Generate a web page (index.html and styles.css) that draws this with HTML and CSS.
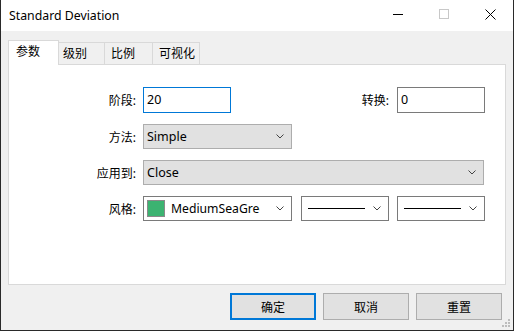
FILE: index.html
```html
<!DOCTYPE html>
<html lang="zh-CN">
<head>
  <meta charset="UTF-8" />
  <title>Standard Deviation</title>
  <link rel="stylesheet" href="styles.css">
</head>
<body>
  <div class="window">
    <div class="titlebar">
      <span class="title">Standard Deviation</span>
      <div class="controls">
        <span class="ctl">
          <svg width="11" height="11" viewBox="0 0 11 11"><line x1="0" y1="5.5" x2="10" y2="5.5" stroke="#000" stroke-width="1"/></svg>
        </span>
        <span class="ctl">
          <svg width="11" height="11" viewBox="0 0 11 11"><rect x="0.5" y="0.5" width="9" height="9" fill="none" stroke="#c8c8c8" stroke-width="1"/></svg>
        </span>
        <span class="ctl">
          <svg width="11" height="11" viewBox="0 0 11 11"><path d="M0.5 0.5 L10.5 10.5 M10.5 0.5 L0.5 10.5" stroke="#000" stroke-width="1"/></svg>
        </span>
      </div>
    </div>

    <div class="body">
      <div class="tabs">
        <div class="tab active">参数</div>
        <div class="tab">级别</div>
        <div class="tab">比例</div>
        <div class="tab">可视化</div>
      </div>

      <div class="panel">
        <div class="row row-1">
          <label class="lbl">阶段:</label>
          <div class="field focus">20</div>
          <label class="lbl lbl-right">转换:</label>
          <div class="field">0</div>
        </div>

        <div class="row">
          <label class="lbl">方法:</label>
          <div class="select w-mid">
            <span class="val">Simple</span>
            <svg class="arrow" width="8" height="5" viewBox="0 0 8 5"><polyline points="0.5,0.5 4,4 7.5,0.5" fill="none" stroke="#444" stroke-width="1"/></svg>
          </div>
        </div>

        <div class="row">
          <label class="lbl">应用到:</label>
          <div class="select w-wide">
            <span class="val">Close</span>
            <svg class="arrow" width="8" height="5" viewBox="0 0 8 5"><polyline points="0.5,0.5 4,4 7.5,0.5" fill="none" stroke="#444" stroke-width="1"/></svg>
          </div>
        </div>

        <div class="row">
          <label class="lbl">风格:</label>
          <div class="select white w-mid">
            <span class="swatch"></span>
            <span class="val clip">MediumSeaGreen</span>
            <svg class="arrow" width="8" height="5" viewBox="0 0 8 5"><polyline points="0.5,0.5 4,4 7.5,0.5" fill="none" stroke="#444" stroke-width="1"/></svg>
          </div>
          <div class="select white w-small gap-9">
            <span class="line"></span>
            <svg class="arrow" width="8" height="5" viewBox="0 0 8 5"><polyline points="0.5,0.5 4,4 7.5,0.5" fill="none" stroke="#444" stroke-width="1"/></svg>
          </div>
          <div class="select white w-small gap-8">
            <span class="line"></span>
            <svg class="arrow" width="8" height="5" viewBox="0 0 8 5"><polyline points="0.5,0.5 4,4 7.5,0.5" fill="none" stroke="#444" stroke-width="1"/></svg>
          </div>
        </div>
      </div>

      <div class="buttons">
        <button class="btn default">确定</button>
        <button class="btn">取消</button>
        <button class="btn">重置</button>
      </div>
    </div>

    <svg class="grip" width="9" height="9" viewBox="0 0 9 9">
      <rect x="6" y="0" width="2" height="2" fill="#bdbdbd"/>
      <rect x="3" y="3" width="2" height="2" fill="#bdbdbd"/>
      <rect x="6" y="3" width="2" height="2" fill="#bdbdbd"/>
      <rect x="0" y="6" width="2" height="2" fill="#bdbdbd"/>
      <rect x="3" y="6" width="2" height="2" fill="#bdbdbd"/>
      <rect x="6" y="6" width="2" height="2" fill="#bdbdbd"/>
    </svg>
  </div>
</body>
</html>
```

FILE: styles.css
```css
* {
  box-sizing: border-box;
}
body {
  margin: 0;
  font-family: "Noto Sans", "Noto Sans CJK SC", sans-serif;
  font-size: 12px;
  color: #000;
  background: #f0f0f0;
}
.window {
  position: relative;
  width: 514px;
  height: 331px;
  border: 1px solid #2a2a2a;
  border-top: none;
  background: #f0f0f0;
  display: flex;
  flex-direction: column;
}
.titlebar {
  height: 31px;
  background: #fff;
  display: flex;
  align-items: center;
  padding-left: 8px;
}
.title {
  font-size: 12.3px;
  margin-top: -1px;
}
.controls {
  margin-left: auto;
  display: flex;
  align-items: center;
  height: 100%;
  padding-right: 17px;
}
.ctl {
  display: flex;
  width: 11px;
  height: 11px;
  margin-left: 35px;
  margin-top: -3px;
}
.body {
  flex: 1;
  display: flex;
  flex-direction: column;
  padding: 9px 7px 0 7px;
}
.tabs {
  display: flex;
  align-items: flex-end;
  height: 24px;
  position: relative;
  z-index: 1;
}
.tab {
  height: 22px;
  padding: 0 0 0 6px;
  border: 1px solid #d9d9d9;
  border-bottom: none;
  border-left: none;
  background: #f0f0f0;
  display: flex;
  align-items: center;
  font-size: 12px;
  line-height: 1;
  white-space: nowrap;
}
.tab.active {
  height: 25px;
  margin-bottom: -1px;
  background: #fff;
  border-left: 1px solid #d9d9d9;
  padding: 0 0 3px 7px;
  width: 51px;
}
.tab:nth-child(2) { width: 46px; padding-left: 4px; }
.tab:nth-child(3) { width: 48px; }
.tab:nth-child(4) { width: 47px; }
.panel {
  height: 221px;
  background: #fff;
  border: 1px solid #d9d9d9;
  padding: 22px 20px 0 0;
  display: flex;
  flex-direction: column;
  gap: 11px;
}
.row {
  display: flex;
  align-items: center;
  height: 25px;
}
.row-1 {
  height: 26px;
}
.lbl {
  width: 127px;
  margin-right: 7px;
  text-align: right;
  font-size: 12px;
}
.lbl-right {
  width: auto;
  margin-left: auto;
  margin-right: 8px;
}
.field {
  width: 88px;
  height: 26px;
  border: 1px solid #7a7a7a;
  padding: 0 3px;
  display: flex;
  align-items: center;
  font-size: 12.5px;
  margin-top: -1px;
}
.field.focus {
  border-color: #0078d7;
}
.select {
  height: 25px;
  background: #e1e1e1;
  border: 1px solid #adadad;
  display: flex;
  align-items: center;
  padding: 0 7px 0 3px;
  font-size: 12.5px;
}
.select.white {
  background: #fff;
  border-color: #7a7a7a;
}
.w-mid { width: 149px; }
.w-wide { width: 341px; }
.w-small { width: 88px; padding-left: 6px; }
.gap-9 { margin-left: 9px; }
.gap-8 { margin-left: 8px; }
.val {
  flex: 1;
  white-space: nowrap;
  overflow: hidden;
}
.val.clip {
  margin-left: 6px;
  margin-right: 10px;
  font-size: 12.2px;
}
.swatch {
  width: 18px;
  height: 17px;
  background: #3cb371;
  border: 1px solid #8a8a8a;
  flex-shrink: 0;
}
.line {
  width: 57px;
  height: 1px;
  background: #000;
  margin-right: auto;
}
.arrow {
  flex-shrink: 0;
  margin-left: 6px;
}
.buttons {
  display: flex;
  justify-content: flex-end;
  gap: 7px;
  padding-top: 8px;
  padding-right: 4px;
}
.btn {
  width: 86px;
  height: 27px;
  background: #e1e1e1;
  border: 1px solid #adadad;
  font-family: "Noto Sans CJK SC", sans-serif;
  font-size: 12px;
  color: #000;
  padding: 0;
}
.btn.default {
  border: 2px solid #0078d7;
}
.grip {
  position: absolute;
  right: 2px;
  bottom: 2px;
}
```
